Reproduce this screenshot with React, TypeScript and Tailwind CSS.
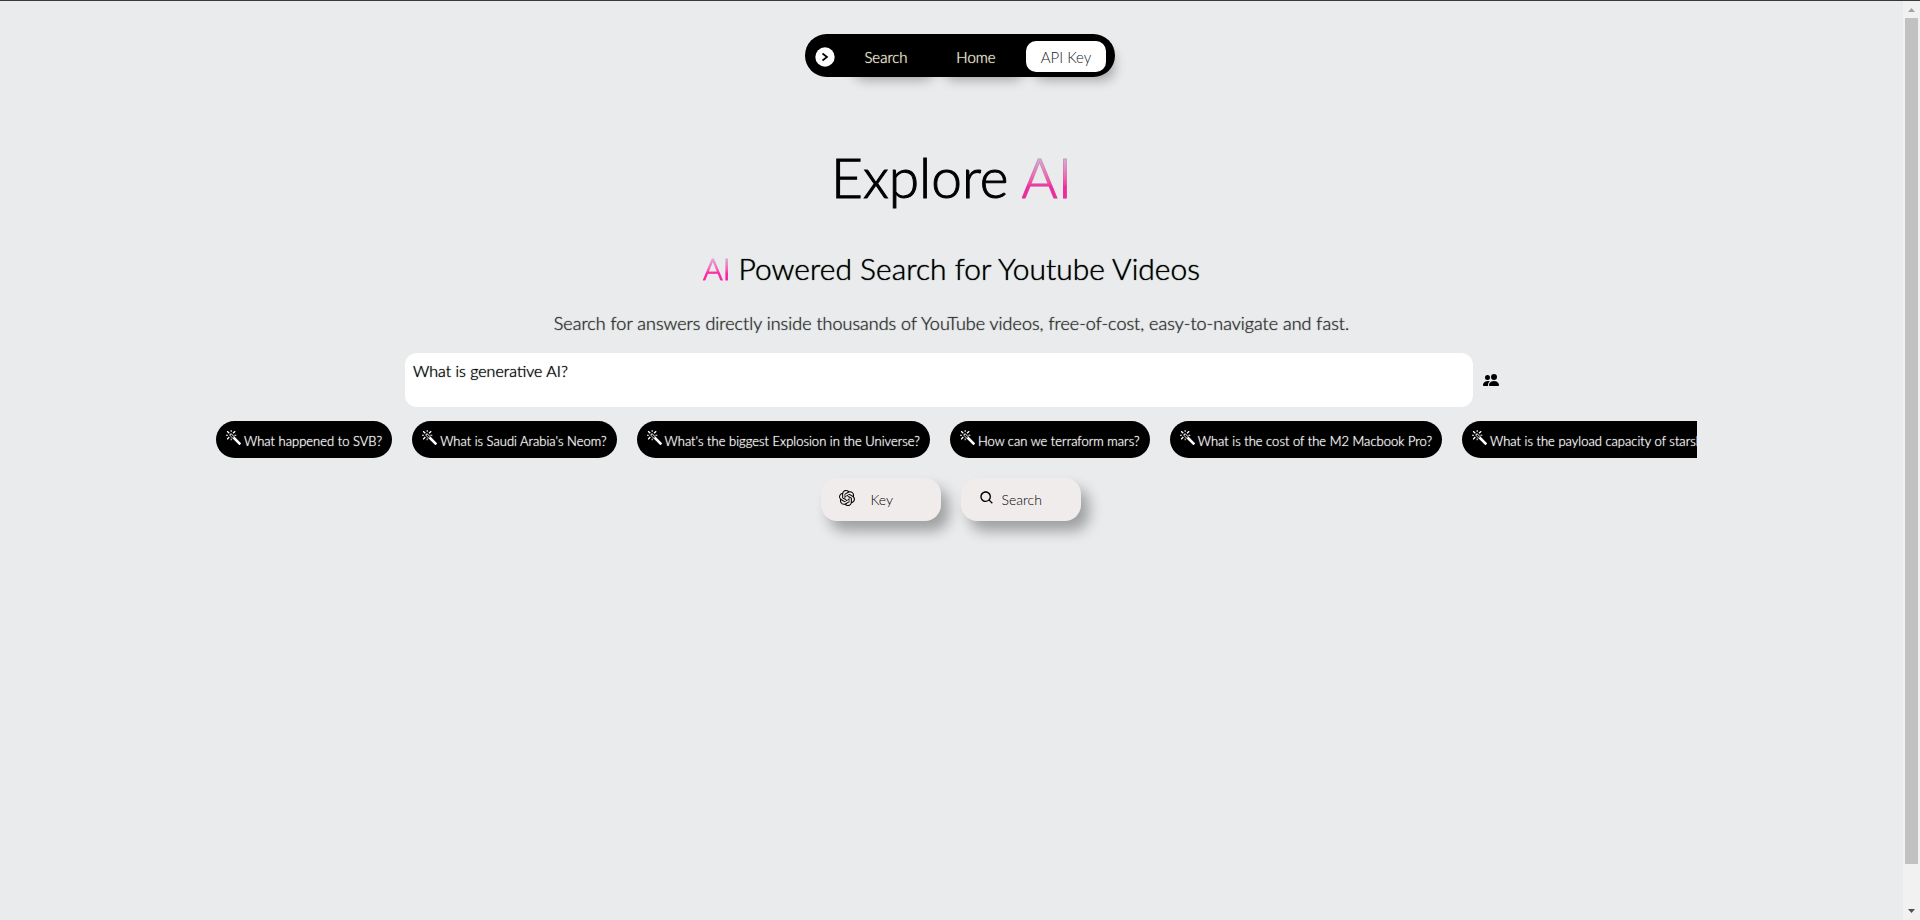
import type { FC } from "react";
import { BiSearch } from "react-icons/bi";
import { BsPeopleFill } from "react-icons/bs";
import { ImMagicWand } from "react-icons/im";
import { SiOpenai } from "react-icons/si";

const suggestions = [
  "What happened to SVB?",
  "What is Saudi Arabia's Neom?",
  "What's the biggest Explosion in the Universe?",
  "How can we terraform mars?",
  "What is the cost of the M2 Macbook Pro?",
  "What is the payload capacity of starship?",
];

const Navbar: FC = () => {
  const item = "h-[31px] w-20 rounded-[10px] pt-px text-[15px] leading-5 shadow-[8px_8px_12px_rgba(0,0,0,0.3)]";
  const dark = "bg-black text-[#f0edd8] [text-shadow:0_0_1px]";
  return (
    <nav className="mx-auto flex h-[43px] w-[310px] items-end rounded-full bg-black pr-[9px] pb-[5px] pl-2.5">
      <button aria-label="Toggle menu" className="mr-auto mb-[5px]">
        <svg width="20" height="20" viewBox="0 0 20 20" fill="none">
          <circle cx="10" cy="10" r="9.7" fill="#fff" />
          <path d="M7.5 6.5L12 10L7.5 13.5" stroke="#000" strokeWidth="1.7" />
        </svg>
      </button>
      <div className="flex gap-2.5">
        <button className={`${item} ${dark}`}>Search</button>
        <button className={`${item} ${dark}`}>Home</button>
        <button className={`${item} bg-white text-[#222]`}>API Key</button>
      </div>
    </nav>
  );
};

const gradient = "bg-linear-to-b from-[#d8b0dd] from-20% to-[#fc23a2] to-65% bg-clip-text text-transparent";

const Hero: FC = () => (
  <header className="text-center text-black">
    <h1 className="text-[55px] leading-[66px] [-webkit-text-stroke:1px_black]">
      Explore <span className={`${gradient} [-webkit-text-stroke:1px_rgba(120,120,120,0.25)]`}>AI</span>
    </h1>
    <h2 className="mt-10 text-3xl leading-9 [text-shadow:0_0_1px]">
      <span className={`${gradient} [-webkit-text-stroke:1px_transparent]`}>AI</span> Powered Search for Youtube Videos
    </h2>
    <p className="mt-[25px] text-lg leading-6 text-[#333] [text-shadow:0_0_1px]">
      Search for answers directly inside thousands of YouTube videos, free-of-cost, easy-to-navigate and fast.
    </p>
  </header>
);

const Suggestions: FC = () => (
  <div className="mt-3.5 mr-[206px] ml-[216px] flex gap-5 overflow-hidden">
    {suggestions.map((text) => (
      <button
        key={text}
        className="flex h-[37px] shrink-0 gap-[3px] rounded-full bg-black px-2.5 text-[13px] text-white [text-shadow:0_0_1px]"
      >
        <ImMagicWand size={15} className="mt-[9px]" />
        <span className="mt-2.5 leading-5 whitespace-nowrap">{text}</span>
      </button>
    ))}
  </div>
);

const Scrollbar: FC = () => (
  <div className="flex w-[17px] shrink-0 flex-col items-center bg-[#f1f1f1] pt-[7px] pb-[7px]">
    <svg width="7" height="4" viewBox="0 0 7 4" fill="#a3a3a3">
      <path d="M0 4L3.5 0L7 4Z" />
    </svg>
    <div className="mt-1.5 mb-[45px] w-[13px] grow bg-[#c1c1c1]" />
    <svg width="7" height="4" viewBox="0 0 7 4" fill="#505050">
      <path d="M0 0L3.5 4L7 0Z" />
    </svg>
  </div>
);

export default function App() {
  const action =
    "flex h-[43px] w-[120px] rounded-2xl bg-[#f1ecec] pt-3 pl-[18px] text-sm text-black shadow-[8px_10px_14px_rgba(0,0,0,0.32)]";
  return (
    <div className="flex min-h-screen border-t border-[#3a383c] bg-[#e9ebec] font-['Lato','Liberation_Sans',sans-serif] font-light">
      <div className="min-w-0 grow">
        <div className="-mr-[17px] pt-[33px]">
          <Navbar />
        </div>
        <main className="pt-[67px]">
          <Hero />
          <form className="mt-[18px] mr-[404px] ml-[405px] flex items-center gap-2.5">
            <textarea
              aria-label="Question"
              defaultValue="What is generative AI?"
              className="h-[54px] grow resize-none rounded-xl bg-white px-2 py-1.5 text-base text-black outline-none [text-shadow:0_0_1px]"
            />
            <button type="button" aria-label="Community">
              <BsPeopleFill size={16} />
            </button>
          </form>
          <Suggestions />
          <div className="mt-5 mr-0.5 flex justify-center gap-5">
            <button className={action}>
              <SiOpenai size={16} />
              <span className="ml-4">Key</span>
            </button>
            <button className={action}>
              <BiSearch size={16} />
              <span className="ml-[7px]">Search</span>
            </button>
          </div>
        </main>
      </div>
      <Scrollbar />
    </div>
  );
}
